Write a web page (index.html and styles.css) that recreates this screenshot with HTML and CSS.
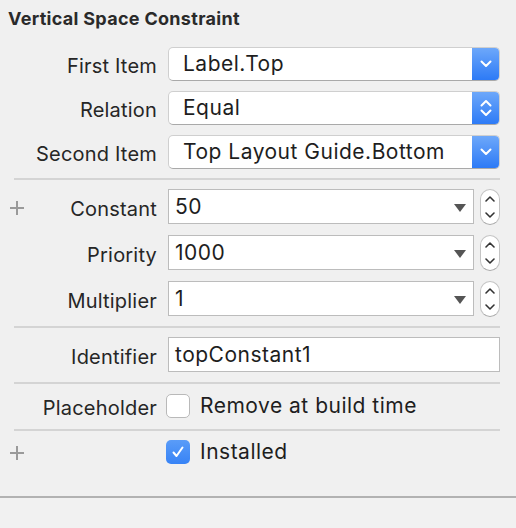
FILE: index.html
```html
<!DOCTYPE html>
<html lang="en">
<head>
    <meta charset="UTF-8">
    <meta name="viewport" content="width=device-width, initial-scale=1.0">
    <title>Vertical Space Constraint</title>
    <link rel="stylesheet" href="styles.css">
</head>
<body>
    <div class="panel">
        <h2 class="title">Vertical Space Constraint</h2>

        <div class="section first">
            <div class="row">
                <div class="label">First Item</div>
                <div class="popup">
                    <span class="value">Label.Top</span>
                    <span class="popup-btn">
                        <svg width="12" height="8" viewBox="0 0 12 8"><path d="M1.5 1.5 L6 6 L10.5 1.5" fill="none" stroke="#fff" stroke-width="2" stroke-linecap="round" stroke-linejoin="round"/></svg>
                    </span>
                </div>
            </div>
            <div class="row">
                <div class="label">Relation</div>
                <div class="popup">
                    <span class="value">Equal</span>
                    <span class="popup-btn">
                        <svg width="12" height="20" viewBox="0 0 12 20"><path d="M1.5 7.5 L6 3 L10.5 7.5 M1.5 12.5 L6 17 L10.5 12.5" fill="none" stroke="#fff" stroke-width="2" stroke-linecap="round" stroke-linejoin="round"/></svg>
                    </span>
                </div>
            </div>
            <div class="row">
                <div class="label">Second Item</div>
                <div class="popup">
                    <span class="value">Top Layout Guide.Bottom</span>
                    <span class="popup-btn">
                        <svg width="12" height="8" viewBox="0 0 12 8"><path d="M1.5 1.5 L6 6 L10.5 1.5" fill="none" stroke="#fff" stroke-width="2" stroke-linecap="round" stroke-linejoin="round"/></svg>
                    </span>
                </div>
            </div>
        </div>
        <div class="sep"></div>

        <div class="section numbers">
            <div class="row">
                <div class="label"><span class="plus"></span>Constant</div>
                <div class="combo-wrap">
                    <div class="combo"><span class="value">50</span><span class="tri"></span></div>
                    <div class="stepper">
                        <svg width="20" height="36" viewBox="0 0 20 36"><path d="M6 12 L10 8 L14 12 M6 24 L10 28 L14 24" fill="none" stroke="#333" stroke-width="1.6" stroke-linecap="round" stroke-linejoin="round"/></svg>
                    </div>
                </div>
            </div>
            <div class="row">
                <div class="label">Priority</div>
                <div class="combo-wrap">
                    <div class="combo"><span class="value">1000</span><span class="tri"></span></div>
                    <div class="stepper">
                        <svg width="20" height="36" viewBox="0 0 20 36"><path d="M6 12 L10 8 L14 12 M6 24 L10 28 L14 24" fill="none" stroke="#333" stroke-width="1.6" stroke-linecap="round" stroke-linejoin="round"/></svg>
                    </div>
                </div>
            </div>
            <div class="row">
                <div class="label">Multiplier</div>
                <div class="combo-wrap">
                    <div class="combo"><span class="value">1</span><span class="tri"></span></div>
                    <div class="stepper">
                        <svg width="20" height="36" viewBox="0 0 20 36"><path d="M6 12 L10 8 L14 12 M6 24 L10 28 L14 24" fill="none" stroke="#333" stroke-width="1.6" stroke-linecap="round" stroke-linejoin="round"/></svg>
                    </div>
                </div>
            </div>
        </div>
        <div class="sep"></div>

        <div class="section ident">
            <div class="row">
                <div class="label">Identifier</div>
                <div class="field"><span class="value">topConstant1</span></div>
            </div>
        </div>
        <div class="sep"></div>

        <div class="section check">
            <div class="row">
                <div class="label">Placeholder</div>
                <div class="checkline">
                    <span class="box"></span>
                    <span class="check-text">Remove at build time</span>
                </div>
            </div>
        </div>
        <div class="sep"></div>

        <div class="section check last">
            <div class="row">
                <div class="label"><span class="plus"></span></div>
                <div class="checkline">
                    <span class="box on">
                        <svg width="14" height="14" viewBox="0 0 14 14"><path d="M2.5 7.5 L5.5 11 L11.5 2.5" fill="none" stroke="#fff" stroke-width="2" stroke-linecap="round" stroke-linejoin="round"/></svg>
                    </span>
                    <span class="check-text">Installed</span>
                </div>
            </div>
        </div>
        <div class="footer"></div>
    </div>
</body>
</html>
```

FILE: styles.css
```css
body {
    margin: 0;
    background: #f0f0f0;
    font-family: Inter, "Liberation Sans", sans-serif;
    color: #262626;
}
.panel {
    width: 516px;
}
.title {
    margin: 0;
    padding: 8px 8px 7px;
    font-size: 18px;
    line-height: 22px;
    letter-spacing: 0.3px;
    font-weight: 700;
    color: #2a2a2a;
}
.section {
    display: flex;
    flex-direction: column;
    width: 500px;
}
.section.first {
    gap: 10px;
    padding: 10px 0 9px;
}
.section.numbers {
    gap: 11px;
    padding: 9px 0 10px;
}
.section.ident {
    padding: 9px 0 10px;
}
.section.check {
    padding: 10px 0 11px;
}
.section.last {
    padding: 9px 0 32px;
}
.row {
    display: grid;
    grid-template-columns: 157px 1fr;
    column-gap: 11px;
    align-items: center;
}
.label {
    display: flex;
    align-items: center;
    justify-content: flex-end;
    height: 24px;
    font-size: 20px;
    line-height: 24px;
    letter-spacing: 0.2px;
    padding: 2px 0 0 10px;
    margin-bottom: -2px;
    white-space: nowrap;
}
.label .plus {
    width: 14px;
    height: 14px;
    margin: -2px auto 0 0;
    background:
        linear-gradient(#9a9a9a, #9a9a9a) center / 14px 2px no-repeat,
        linear-gradient(#9a9a9a, #9a9a9a) center / 2px 14px no-repeat;
}
.value {
    font-size: 21px;
    line-height: 24px;
    letter-spacing: 0.5px;
    color: #1e1e1e;
    white-space: nowrap;
}
.popup {
    display: flex;
    height: 34px;
    box-sizing: border-box;
    background: #fff;
    border: 1px solid #cfcfcf;
    border-bottom-color: #a9a9a9;
    border-radius: 5px;
    overflow: hidden;
}
.popup .value {
    flex: 1;
    align-self: center;
    padding-left: 14px;
}
.popup-btn {
    width: 28px;
    display: flex;
    align-items: center;
    justify-content: center;
    background: linear-gradient(#6fa9fa, #2b79f6);
    margin: -1px -1px -1px 0;
}
.combo-wrap {
    display: flex;
    align-items: center;
    gap: 6px;
    height: 35px;
}
.combo {
    flex: 1;
    display: flex;
    align-items: center;
    height: 35px;
    box-sizing: border-box;
    background: #fff;
    border: 1px solid #bcbcbc;
    padding: 0 7px 0 6px;
}
.combo .value {
    flex: 1;
}
.tri {
    width: 0;
    height: 0;
    border-left: 6px solid transparent;
    border-right: 6px solid transparent;
    border-top: 8px solid #555;
    margin-top: 2px;
}
.stepper {
    width: 20px;
    height: 36px;
    margin-top: 1px;
    box-sizing: border-box;
    background: #fff;
    border: 1px solid #c4c4c4;
    border-bottom-color: #a9a9a9;
    border-radius: 10px;
    display: flex;
    align-items: center;
    justify-content: center;
    overflow: hidden;
}
.stepper svg {
    flex-shrink: 0;
}
.field {
    height: 35px;
    box-sizing: border-box;
    background: #fff;
    border: 1px solid #bcbcbc;
    padding: 0 6px;
    display: flex;
    align-items: center;
}
.sep {
    height: 2px;
    margin-left: 14px;
    width: 486px;
    background: #d4d4d4;
}
.checkline {
    display: flex;
    align-items: center;
    gap: 10px;
    margin-left: -2px;
    height: 24px;
}
.box {
    width: 24px;
    height: 24px;
    box-sizing: border-box;
    border: 1px solid #b9b9b9;
    border-radius: 5px;
    background: #fff;
    display: flex;
    align-items: center;
    justify-content: center;
}
.box.on {
    border: none;
    background: linear-gradient(#5a9cf8, #3783f6);
}
.check-text {
    font-size: 21px;
    line-height: 24px;
    letter-spacing: 0.5px;
    color: #1e1e1e;
}
.footer {
    border-top: 2px solid #b2b2b2;
    height: 30px;
    background: #f1f1f1;
}
```
